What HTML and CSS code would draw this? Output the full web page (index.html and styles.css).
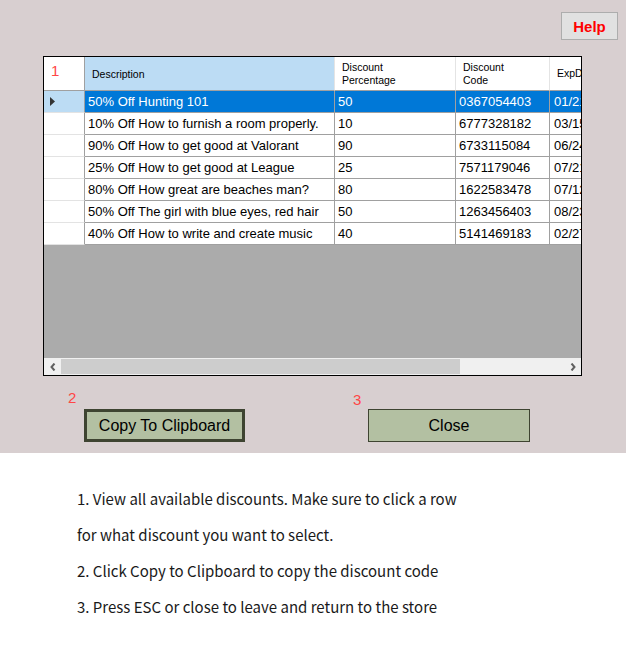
FILE: index.html
```html
<!DOCTYPE html>
<html>
<head>
<meta charset="utf-8">
<title>Discounts</title>
<link rel="stylesheet" href="styles.css">
</head>
<body>
<div class="form">
  <div class="topbar">
    <button class="help">Help</button>
  </div>
  <div class="grid">
    <div class="row head">
      <div class="c rh"><span class="num">1</span></div>
      <div class="c desc hsel">Description</div>
      <div class="c pct">Discount<br>Percentage</div>
      <div class="c code">Discount<br>Code</div>
      <div class="c exp">ExpDate</div>
    </div>
    <div class="row sel">
      <div class="c rh"><svg class="tri" width="6" height="9" viewBox="0 0 6 9"><path d="M0 0 L5 4.5 L0 9 Z" fill="#333"/></svg></div>
      <div class="c desc">50% Off Hunting 101</div>
      <div class="c pct">50</div>
      <div class="c code">0367054403</div>
      <div class="c exp">01/21/2023</div>
    </div>
    <div class="row">
      <div class="c rh"></div>
      <div class="c desc">10% Off How to furnish a room properly.</div>
      <div class="c pct">10</div>
      <div class="c code">6777328182</div>
      <div class="c exp">03/15/2023</div>
    </div>
    <div class="row">
      <div class="c rh"></div>
      <div class="c desc">90% Off How to get good at Valorant</div>
      <div class="c pct">90</div>
      <div class="c code">6733115084</div>
      <div class="c exp">06/24/2023</div>
    </div>
    <div class="row">
      <div class="c rh"></div>
      <div class="c desc">25% Off How to get good at League</div>
      <div class="c pct">25</div>
      <div class="c code">7571179046</div>
      <div class="c exp">07/21/2023</div>
    </div>
    <div class="row">
      <div class="c rh"></div>
      <div class="c desc">80% Off How great are beaches man?</div>
      <div class="c pct">80</div>
      <div class="c code">1622583478</div>
      <div class="c exp">07/12/2023</div>
    </div>
    <div class="row">
      <div class="c rh"></div>
      <div class="c desc">50% Off The girl with blue eyes, red hair</div>
      <div class="c pct">50</div>
      <div class="c code">1263456403</div>
      <div class="c exp">08/23/2023</div>
    </div>
    <div class="row">
      <div class="c rh"></div>
      <div class="c desc">40% Off How to write and create music</div>
      <div class="c pct">40</div>
      <div class="c code">5141469183</div>
      <div class="c exp">02/27/2023</div>
    </div>
    <div class="filler"></div>
    <div class="hscroll">
      <div class="arrow"><svg width="6" height="8" viewBox="0 0 6 8"><path d="M4.5 0.5 L1.5 4 L4.5 7.5" fill="none" stroke="#606060" stroke-width="2"/></svg></div>
      <div class="track"><div class="thumb"></div></div>
      <div class="arrow"><svg width="6" height="8" viewBox="0 0 6 8"><path d="M1.5 0.5 L4.5 4 L1.5 7.5" fill="none" stroke="#606060" stroke-width="2"/></svg></div>
    </div>
  </div>
  <div class="actions">
    <div class="action first">
      <span class="num">2</span>
      <button class="btn copy">Copy To Clipboard</button>
    </div>
    <div class="action second">
      <span class="num">3</span>
      <button class="btn close">Close</button>
    </div>
  </div>
</div>
<div class="instructions">
  <p>1. View all available discounts. Make sure to click a row</p>
  <p>for what discount you want to select.</p>
  <p>2. Click Copy to Clipboard to copy the discount code</p>
  <p>3. Press ESC or close to leave and return to the store</p>
</div>
</body>
</html>
```

FILE: styles.css
```css
html, body {
  margin: 0;
  padding: 0;
  background: #ffffff;
  font-family: "Liberation Sans", Arial, sans-serif;
}

.form {
  background: #d8cfd0;
  height: 453px;
  box-sizing: border-box;
  padding-top: 12px;
}

.topbar {
  display: flex;
  justify-content: flex-end;
  padding-right: 8px;
}

.help {
  width: 57px;
  height: 28px;
  box-sizing: border-box;
  background: #e1e1e1;
  border: 1px solid #adadad;
  color: #ff0000;
  font-family: "Liberation Sans", Arial, sans-serif;
  font-weight: bold;
  font-size: 15px;
  padding: 0;
  margin: 0;
}

.grid {
  margin: 16px 0 0 43px;
  width: 539px;
  height: 320px;
  box-sizing: border-box;
  border: 1px solid #000;
  overflow: hidden;
  display: flex;
  flex-direction: column;
  background: #ababab;
}

.row {
  display: flex;
  flex-shrink: 0;
  height: 22px;
  background: #ffffff;
  font-size: 13px;
  color: #000;
}

.c {
  flex-shrink: 0;
  box-sizing: border-box;
  border-right: 1px solid #a0a0a0;
  border-bottom: 1px solid #a0a0a0;
  padding-left: 3px;
  line-height: 21px;
  white-space: nowrap;
  overflow: hidden;
}

.rh {
  width: 41px;
  border-bottom-color: #e3e3e3;
  padding-left: 0;
  display: flex;
  align-items: center;
}
.desc { width: 250px; }
.pct { width: 121px; }
.code { width: 94px; }
.exp { width: 80px; padding-left: 4px; }

.row.head {
  height: 34px;
  font-size: 10.5px;
}
.head .c {
  line-height: 13px;
  padding-left: 7px;
  display: flex;
  align-items: center;
  border-right-color: #e4e4e4;
  border-bottom-color: #a0a0a0;
}
.head .rh {
  border-right-color: #a0a0a0;
  padding-left: 7px;
  align-items: flex-start;
  padding-top: 6px;
}
.head .hsel {
  background: #bcdcf4;
  font-size: 10.5px;
  padding-top: 2px;
}

.num {
  color: #ff4646;
  font-size: 15px;
  line-height: 16px;
}

.sel .c {
  background: #0078d7;
  color: #ffffff;
}
.sel .rh {
  background: #bcdcf4;
}
.tri {
  margin-left: 6px;
}

.filler {
  flex: 1;
  background: #ababab;
}

.hscroll {
  height: 17px;
  flex-shrink: 0;
  display: flex;
  background: #f0f0f0;
}
.arrow {
  width: 17px;
  flex-shrink: 0;
  display: flex;
  align-items: center;
  justify-content: center;
}
.track {
  flex: 1;
  padding: 1px 0;
  box-sizing: border-box;
}
.thumb {
  width: 399px;
  height: 15px;
  background: #cdcdcd;
}

.actions {
  display: flex;
  align-items: flex-end;
  padding-top: 14px;
}
.action {
  display: flex;
  flex-direction: column;
  align-items: flex-start;
}
.action.first {
  margin-left: 68px;
}
.action.first .num {
  margin-bottom: 3px;
}
.action.second {
  margin-left: 108px;
}
.action.second .num {
  margin-bottom: 1px;
}

.btn {
  height: 33px;
  box-sizing: border-box;
  background: #b3c0a2;
  color: #000;
  font-family: "Liberation Sans", Arial, sans-serif;
  font-size: 16px;
  padding: 0;
  margin: 0;
}
.copy {
  width: 161px;
  margin-left: 16px;
  border: 3px solid #3e4431;
}
.close {
  width: 162px;
  margin-left: 15px;
  border: 1px solid #3e4431;
}

.instructions {
  padding: 28px 0 0 77px;
  font-family: "Noto Sans CJK JP", "DejaVu Sans", sans-serif;
  font-size: 15px;
  color: #1a1a1a;
}
.instructions p {
  margin: 0;
  line-height: 36px;
}
```
